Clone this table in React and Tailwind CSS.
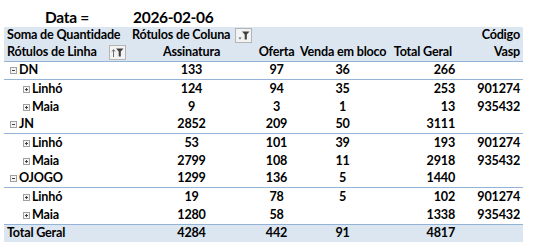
import React from "react";

const font = { fontFamily: "Lato, 'Open Sans', sans-serif" };

function Box({ plus }) {
  return (
    <span className="relative inline-block w-[7px] h-[7px] border border-[#a0a0a0] bg-[#f4f4f4] mr-[2px] align-middle shrink-0">
      <span className="absolute left-[1px] top-[2px] w-[3px] h-[1px] bg-[#404040]" />
      {plus && <span className="absolute left-[2px] top-[1px] w-[1px] h-[3px] bg-[#404040]" />}
    </span>
  );
}

function FilterBtn({ sort }) {
  return (
    <span className="inline-flex items-center justify-center w-[17px] h-[15px] border border-[#b4b4b4] bg-[#f3f3f3]">
      <svg width="13" height="11" viewBox="0 0 13 11">
        {sort ? (
          <>
            <path d="M2.5 10V3" stroke="#707070" strokeWidth="1" />
            <path d="M1 4.5L2.5 2.5L4 4.5" stroke="#707070" strokeWidth="1" fill="none" />
          </>
        ) : (
          <path d="M1.5 7.5H4.5L3 9.5Z" fill="#606060" />
        )}
        <path d="M5 1.5H12.5L9.8 4.5V9.5H7.7V4.5Z" fill="#404040" />
      </svg>
    </span>
  );
}

const cols = ["w-[126px]", "w-[123px]", "w-[47px]", "w-[85px]", "w-[72px]", "w-[66px]"];

const rows = [
  { type: "p", label: "DN", v: ["133", "97", "36", "266", ""] },
  { type: "c", label: "Linhó", v: ["124", "94", "35", "253", "901274"] },
  { type: "c", label: "Maia", v: ["9", "3", "1", "13", "935432"] },
  { type: "p", label: "JN", v: ["2852", "209", "50", "3111", ""] },
  { type: "c", label: "Linhó", v: ["53", "101", "39", "193", "901274"] },
  { type: "c", label: "Maia", v: ["2799", "108", "11", "2918", "935432"] },
  { type: "p", label: "OJOGO", v: ["1299", "136", "5", "1440", ""] },
  { type: "c", label: "Linhó", v: ["19", "78", "5", "102", "901274"] },
  { type: "c", label: "Maia", v: ["1280", "58", "", "1338", "935432"] },
];

function Cells({ v }) {
  return (
    <>
      <div className={`${cols[1]} text-center`}>{v[0]}</div>
      <div className={`${cols[2]} text-center`}>{v[1]}</div>
      <div className={`${cols[3]} text-center`}>{v[2]}</div>
      <div className={`${cols[4]} text-right pr-[2px]`}>{v[3]}</div>
      <div className={`${cols[5]} text-right pr-[3px]`}>{v[4]}</div>
    </>
  );
}

export default function App() {
  return (
    <div className="w-[544px] h-[251px] bg-white text-black font-bold text-[12.6px] tracking-[-0.2px] leading-none" style={font}>
      <div className="flex h-[27px] items-center pl-[4px] text-[15.5px] pt-[8px] tracking-[-0.3px]">
        <div className={`${cols[0]} text-center`}>Data =</div>
        <div className="pl-[3px]">2026-02-06</div>
      </div>
      <div className="ml-[4px] w-[519px]">
        <div className="bg-[#dce6f1] border-b border-[#95b3d7]">
          <div className="flex h-[17px] items-center whitespace-nowrap">
            <div className={`${cols[0]} pl-[3px]`}>Soma de Quantidade</div>
            <div className={`${cols[1]} flex items-center pl-[2px]`}>
              <span>Rótulos de Coluna</span>
              <span className="ml-[5px] mt-[1px]"><FilterBtn /></span>
            </div>
            <div className={cols[2]} />
            <div className={cols[3]} />
            <div className={cols[4]} />
            <div className={`${cols[5]} text-right pr-[3px]`}>Código</div>
          </div>
          <div className="flex h-[17px] items-center whitespace-nowrap">
            <div className={`${cols[0]} pl-[3px] flex items-center justify-between pr-[4px]`}>
              <span>Rótulos de Linha</span>
              <FilterBtn sort />
            </div>
            <div className={`${cols[1]} text-center`}>Assinatura</div>
            <div className={`${cols[2]} text-center`}>Oferta</div>
            <div className={`${cols[3]} text-center`}>Venda em bloco</div>
            <div className={`${cols[4]} text-right pr-[5px]`}>Total Geral</div>
            <div className={`${cols[5]} text-right pr-[3px]`}>Vasp</div>
          </div>
        </div>
        {rows.map((r, i) => (
          <div
            key={i}
            className={`flex h-[18px] items-center whitespace-nowrap ${r.type === "p" ? "border-b border-[#95b3d7]" : ""}`}
          >
            <div className={`${cols[0]} flex items-center ${r.type === "p" ? "pl-[6px]" : "pl-[19px]"}`}>
              <Box plus={r.type === "c"} />
              <span>{r.label}</span>
            </div>
            <Cells v={r.v} />
          </div>
        ))}
        <div className="flex h-[18px] items-center whitespace-nowrap bg-[#dce6f1] border-t border-[#95b3d7]">
          <div className={`${cols[0]} pl-[3px]`}>Total Geral</div>
          <Cells v={["4284", "442", "91", "4817", ""]} />
        </div>
      </div>
    </div>
  );
}
